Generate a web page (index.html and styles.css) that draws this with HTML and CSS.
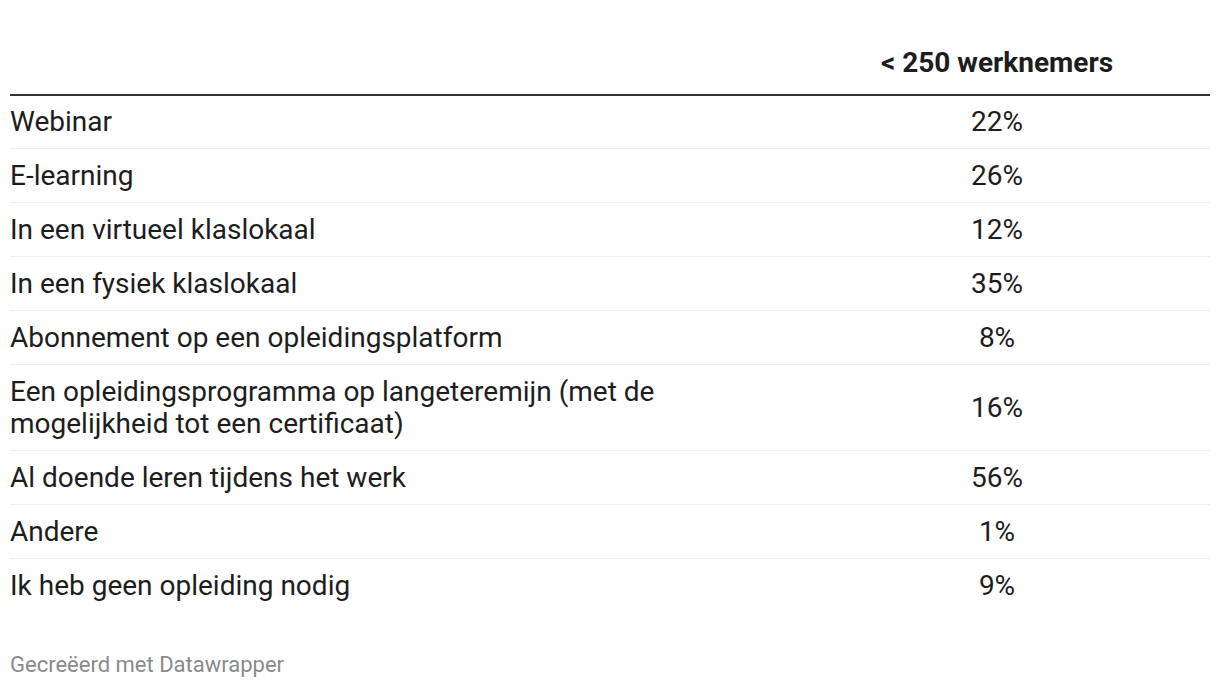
FILE: index.html
```html
<!DOCTYPE html>
<html lang="nl">
<head>
<meta charset="utf-8">
<title>Opleidingsvormen</title>
<link rel="stylesheet" href="styles.css">
</head>
<body>
<div class="chart">
  <table class="dw-table">
    <thead>
      <tr>
        <th class="col-label"></th>
        <th class="col-value">&lt; 250 werknemers</th>
      </tr>
    </thead>
    <tbody>
      <tr><td class="col-label">Webinar</td><td class="col-value">22%</td></tr>
      <tr><td class="col-label">E-learning</td><td class="col-value">26%</td></tr>
      <tr><td class="col-label">In een virtueel klaslokaal</td><td class="col-value">12%</td></tr>
      <tr><td class="col-label">In een fysiek klaslokaal</td><td class="col-value">35%</td></tr>
      <tr><td class="col-label">Abonnement op een opleidingsplatform</td><td class="col-value">8%</td></tr>
      <tr><td class="col-label">Een opleidingsprogramma op langeteremijn (met de mogelijkheid tot een certificaat)</td><td class="col-value">16%</td></tr>
      <tr><td class="col-label">Al doende leren tijdens het werk</td><td class="col-value">56%</td></tr>
      <tr><td class="col-label">Andere</td><td class="col-value">1%</td></tr>
      <tr><td class="col-label">Ik heb geen opleiding nodig</td><td class="col-value">9%</td></tr>
    </tbody>
  </table>
  <div class="footer">Gecreëerd met Datawrapper</div>
</div>
</body>
</html>
```

FILE: styles.css
```css
html, body {
  margin: 0;
  padding: 0;
  background: #ffffff;
}

body {
  font-family: Roboto, "Liberation Sans", sans-serif;
  color: #1d1d1d;
}

.chart {
  padding: 37px 10px 0 10px;
}

.dw-table {
  width: 1200px;
  border-collapse: collapse;
  table-layout: fixed;
}

.dw-table th,
.dw-table td {
  padding: 11px 0 10px 0;
  vertical-align: middle;
}

.dw-table thead th {
  font-size: 28px;
  font-weight: 700;
  line-height: 32px;
  padding: 10px 0 15px 0;
  border-bottom: 2px solid #333333;
  color: #1d1d1d;
}

.dw-table tbody td {
  font-size: 28px;
  line-height: 32px;
  border-bottom: 1px solid #eeeeee;
}

.dw-table tbody tr:first-child td {
  padding-top: 10px;
  padding-bottom: 10px;
}

.dw-table tbody tr:last-child td {
  border-bottom: none;
}

.col-label {
  text-align: left;
}

.dw-table th.col-value,
.dw-table td.col-value {
  width: 426px;
  text-align: center;
}

.dw-table tbody td.col-label {
  padding-right: 120px;
}

.footer {
  margin-top: 40px;
  font-size: 22px;
  line-height: 26px;
  color: #8a8a8a;
}
```
